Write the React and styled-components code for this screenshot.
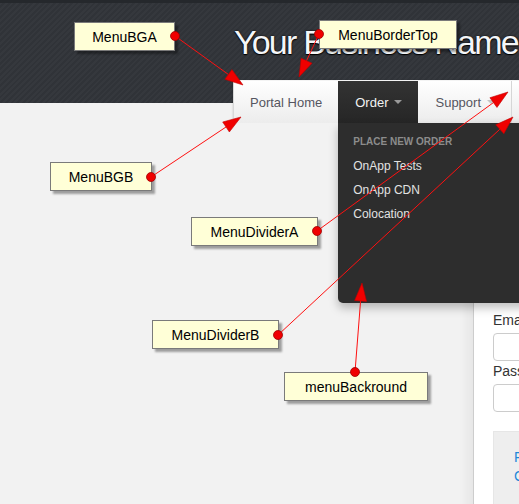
import styled, { createGlobalStyle } from "styled-components";

const GlobalStyle = createGlobalStyle`
  html, body {
    margin: 0;
    padding: 0;
    background: #f2f2f2;
    font-family: "Liberation Sans", Arial, sans-serif;
  }
`;

const navItems = [
  { label: "Portal Home", pad: 16 },
  { label: "Order", caret: true, active: true, pad: 17 },
  { label: "Support", caret: true, pad: 17, divider: true },
  { label: "Knowledgebase", pad: 17 },
];

const orderMenu = ["OnApp Tests", "OnApp CDN", "Colocation"];

const callouts = [
  { text: "MenuBGA", x: 74, y: 22, w: 101, dot: [175, 36], tip: [243, 85] },
  { text: "MenuBorderTop", x: 319, y: 20, w: 138, dot: [319, 34], tip: [299, 77] },
  { text: "MenuBGB", x: 50, y: 162, w: 102, dot: [151, 177], tip: [241, 117] },
  { text: "MenuDividerA", x: 191, y: 217, w: 127, dot: [317, 231], tip: [508, 92] },
  { text: "MenuDividerB", x: 152, y: 320, w: 127, dot: [278, 335], tip: [513, 117] },
  { text: "menuBackround", x: 284, y: 372, w: 144, dot: [355, 372], tip: [362, 283] },
];

export default function App() {
  return (
    <Page>
      <GlobalStyle />
      <Header>
        <Container>
          <Title>Your Business Name</Title>
          <Nav>
            {navItems.map((item) => (
              <NavItem
                key={item.label}
                $active={item.active}
                $pad={item.pad}
                $divider={item.divider}
              >
                {item.label}
                {item.caret && <Caret $active={item.active} />}
                {item.active && (
                  <Dropdown>
                    <MenuHeader>PLACE NEW ORDER</MenuHeader>
                    {orderMenu.map((m) => (
                      <MenuLink key={m}>{m}</MenuLink>
                    ))}
                  </Dropdown>
                )}
              </NavItem>
            ))}
          </Nav>
        </Container>
      </Header>
      <Main>
        <Side />
        <Panel>
          <Label>Email Address</Label>
          <Input />
          <Label>Password</Label>
          <Input />
          <Links>
            <Link>Forgot Password?</Link>
            <Link>Create a new account</Link>
          </Links>
        </Panel>
      </Main>

      {callouts.map((c) => (
        <Callout key={c.text} $x={c.x} $y={c.y} $w={c.w}>
          {c.text}
        </Callout>
      ))}
      <Arrows viewBox="0 0 519 504">
        {callouts.map((c) => (
          <Arrow key={c.text} from={c.dot} to={c.tip} />
        ))}
      </Arrows>
    </Page>
  );
}

const Arrow = ({ from, to }) => {
  const [x1, y1] = from;
  const [x2, y2] = to;
  const dx = x2 - x1;
  const dy = y2 - y1;
  const len = Math.hypot(dx, dy);
  const ux = dx / len;
  const uy = dy / len;
  const bx = x2 - ux * 18;
  const by = y2 - uy * 18;
  const head = `${x2},${y2} ${bx - uy * 6},${by + ux * 6} ${bx + uy * 6},${by - ux * 6}`;
  return (
    <g>
      <line x1={x1} y1={y1} x2={bx} y2={by} stroke="#ff1010" strokeWidth="1" />
      <polygon points={head} fill="#f00000" stroke="#c00000" strokeWidth="0.6" />
      <circle cx={x1} cy={y1} r="4.5" fill="#f00000" stroke="#a00000" strokeWidth="0.8" />
    </g>
  );
};

const Page = styled.div`
  position: relative;
  width: 519px;
  height: 504px;
  overflow: hidden;
  background: #f2f2f2;
`;

const Header = styled.header`
  border-top: 3px solid #25282c;
  background:
    linear-gradient(to bottom, transparent 100px, #f2f2f2 100px),
    repeating-linear-gradient(
      -45deg,
      #303338 0px,
      #303338 2px,
      #35383d 2px,
      #35383d 4px
    );
`;

const Container = styled.div`
  padding: 19px 0 0 233px;
`;

const Title = styled.h1`
  margin: 0 0 18px 1px;
  font-size: 34px;
  line-height: 40px;
  font-weight: normal;
  letter-spacing: -1.8px;
  white-space: nowrap;
  color: #f4f6f8;
  text-shadow: 0 0 2px #000, 0 1px 1px #000;
`;

const Nav = styled.nav`
  display: flex;
  height: 43px;
  width: max-content;
  box-sizing: border-box;
  border-top: 1px solid #f4f4f4;
  border-left: 1px solid #d8d8d8;
  background: linear-gradient(to bottom, #ffffff, #ececec);
  box-shadow: 0 1px 2px rgba(0, 0, 0, 0.18);
`;

const NavItem = styled.div`
  position: relative;
  display: flex;
  align-items: center;
  padding: 0 16px 0 ${(p) => p.$pad}px;
  font-size: 13px;
  white-space: nowrap;
  color: ${(p) => (p.$active ? "#f2f2f2" : "#555560")};
  border-right: ${(p) => (p.$divider ? "1px solid #d6d6d6" : "none")};
  background: ${(p) =>
    p.$active ? "linear-gradient(to bottom, #333333, #262626)" : "none"};
`;

const Caret = styled.span`
  display: inline-block;
  margin-left: 6px;
  width: 0;
  height: 0;
  border-top: 4px solid ${(p) => (p.$active ? "#9a9a9a" : "#c4c4c4")};
  border-left: 4px solid transparent;
  border-right: 4px solid transparent;
`;

const Dropdown = styled.div`
  position: absolute;
  top: 100%;
  left: 0;
  z-index: 5;
  width: 240px;
  height: 180px;
  box-sizing: border-box;
  padding: 11px 0 9px;
  background: #2d2d2d;
  border-radius: 0 0 5px 5px;
  box-shadow: 0 5px 10px rgba(0, 0, 0, 0.25);
`;

const MenuHeader = styled.div`
  padding: 0 15px;
  margin-bottom: 4px;
  height: 16px;
  line-height: 16px;
  font-size: 10px;
  font-weight: bold;
  color: #8c8c8c;
`;

const MenuLink = styled.div`
  padding: 0 15px;
  height: 24px;
  line-height: 24px;
  font-size: 12px;
  color: #e2e2e2;
`;

const Main = styled.div`
  display: grid;
  grid-template-columns: 473px 1fr;
  height: 381px;
`;

const Side = styled.div`
  background: #f2f2f2;
`;

const Panel = styled.div`
  padding: 187px 0 0 19px;
  background: #ffffff;
  border-left: 1px solid #cdcdcd;
  box-shadow: -6px 0 10px rgba(0, 0, 0, 0.05);
  width: 240px;
`;

const Label = styled.div`
  font-size: 14px;
  line-height: 20px;
  margin-bottom: 3px;
  white-space: nowrap;
  color: #333333;
`;

const Input = styled.div`
  height: 28px;
  box-sizing: border-box;
  border: 1px solid #cccccc;
  border-radius: 4px;
  background: #fff;
`;

const Links = styled.div`
  margin-top: 19px;
  padding: 16px 20px;
  height: 100px;
  background: #eeeeee;
  border: 1px solid #e6e6e6;
`;

const Link = styled.div`
  font-size: 14px;
  line-height: 19px;
  white-space: nowrap;
  color: #1f88d8;
`;

const Callout = styled.div`
  position: absolute;
  left: ${(p) => p.$x}px;
  top: ${(p) => p.$y}px;
  width: ${(p) => p.$w}px;
  height: 29px;
  box-sizing: border-box;
  display: flex;
  align-items: center;
  justify-content: center;
  z-index: 10;
  font-size: 14px;
  color: #000;
  background: #ffffd7;
  border: 1px solid #7a7a7a;
  box-shadow: 3px 3px 2px rgba(0, 0, 0, 0.35);
`;

const Arrows = styled.svg`
  position: absolute;
  left: 0;
  top: 0;
  width: 519px;
  height: 504px;
  z-index: 11;
  pointer-events: none;
`;
